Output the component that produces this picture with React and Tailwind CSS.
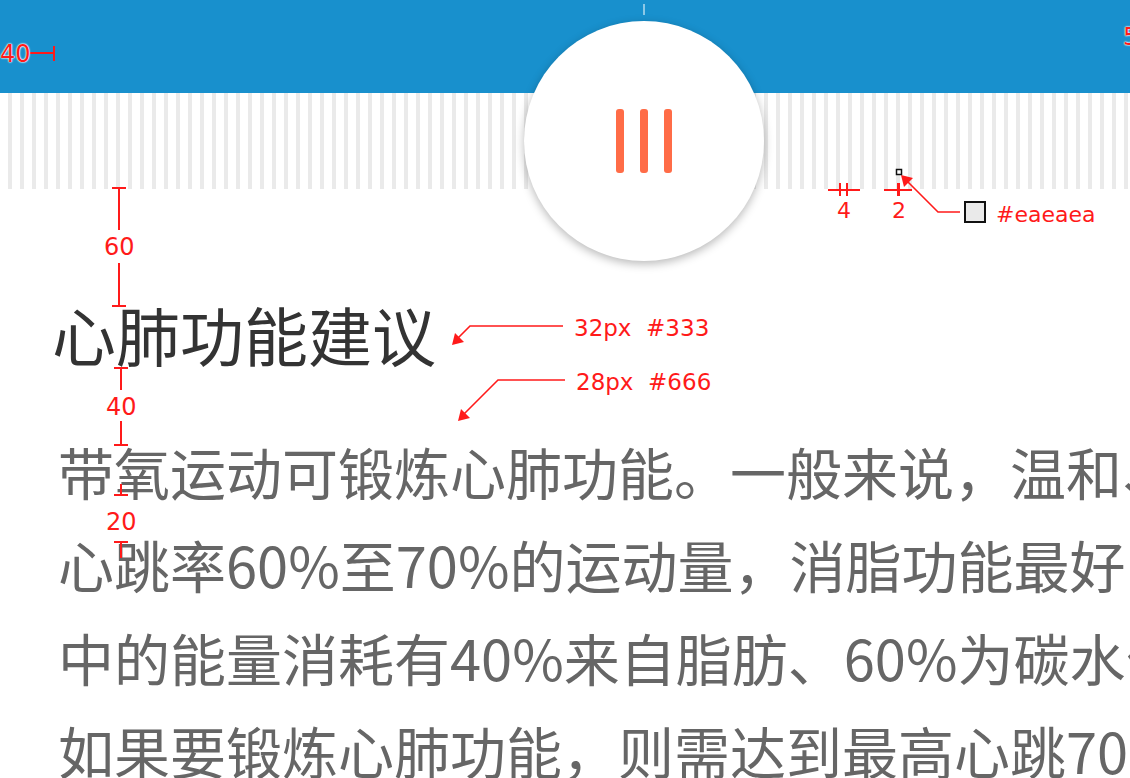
import React from 'react';

// body copy, broken by hand the way the spec sheet shows it (clipped on the right)
const BODY_LINES = [
  '带氧运动可锻炼心肺功能。一般来说，温和、',
  '心跳率60%至70%的运动量，消脂功能最好',
  '中的能量消耗有40%来自脂肪、60%为碳水化',
  '如果要锻炼心肺功能，则需达到最高心跳70%',
];

const RED = '#ff1a1a';

function Label({ className, children }) {
  return (
    <span
      className={`absolute leading-none whitespace-pre text-[#ff1a1a] font-['DejaVu_Sans',sans-serif] ${className}`}
    >
      {children}
    </span>
  );
}

// red spec marks drawn over the page
function SpecMarks() {
  return (
    <>
      <svg
        className="absolute inset-0 pointer-events-none"
        width="1130"
        height="778"
        viewBox="0 0 1130 778"
        fill="none"
      >
        <g stroke={RED} strokeWidth="2">
          {/* left padding 40 */}
          <line x1="30" y1="53" x2="54" y2="53" />
          <line x1="54" y1="46" x2="54" y2="61" />

          {/* 60 */}
          <line x1="112" y1="188" x2="126" y2="188" />
          <line x1="119" y1="188" x2="119" y2="230" />
          <line x1="119" y1="263" x2="119" y2="306" />
          <line x1="112" y1="306" x2="126" y2="306" />

          {/* 40 */}
          <line x1="114" y1="368" x2="128" y2="368" />
          <line x1="121" y1="368" x2="121" y2="390" />
          <line x1="121" y1="421" x2="121" y2="445" />
          <line x1="114" y1="445" x2="128" y2="445" />

          {/* 20 */}
          <line x1="121" y1="484" x2="121" y2="495" />
          <line x1="114" y1="495" x2="128" y2="495" />
          <line x1="114" y1="542" x2="128" y2="542" />
          <line x1="121" y1="542" x2="121" y2="558" />

          {/* stripe gap 4 / stripe width 2 */}
          <line x1="828" y1="190" x2="860" y2="190" />
          <line x1="840" y1="183" x2="840" y2="196" />
          <line x1="847" y1="183" x2="847" y2="196" />
          <line x1="884" y1="190" x2="912" y2="190" />
          <line x1="898.5" y1="183" x2="898.5" y2="196" strokeWidth="3" />
        </g>

        <g stroke={RED} strokeWidth="1.6">
          <polyline points="563,326 470,326 456,340" />
          <polyline points="565,380 498,380 462,416" />
          <polyline points="960,212 938,212 905,179" />
        </g>
        <g fill={RED}>
          <polygon points="452,345 455,333 464,342" />
          <polygon points="458,421 461,409 470,418" />
          <polygon points="901,175 913,178 904,187" />
        </g>

        {/* picked pixel + swatch */}
        <rect x="896.5" y="169.5" width="5" height="5" fill="#fff" stroke="#111" strokeWidth="1.5" />
        <rect x="965" y="202" width="20" height="20" fill="#eaeaea" stroke="#111" strokeWidth="2" />
      </svg>

      <Label className="left-0 top-[42px] text-[24px] [text-shadow:0_0_2px_#fff,0_0_2px_#fff,0_0_1px_#fff]">40</Label>
      <Label className="left-[1123px] top-[25px] text-[24px] [text-shadow:0_0_2px_#fff,0_0_2px_#fff,0_0_1px_#fff]">5</Label>
      <Label className="left-[104px] top-[235px] text-[24px]">60</Label>
      <Label className="left-[106px] top-[395px] text-[24px]">40</Label>
      <Label className="left-[106px] top-[510px] text-[24px]">20</Label>
      <Label className="left-[837px] top-[200px] text-[22px]">4</Label>
      <Label className="left-[892px] top-[200px] text-[22px]">2</Label>
      <Label className="left-[996px] top-[204px] text-[22px]">#eaeaea</Label>
      <Label className="left-[574px] top-[317px] text-[23px]">32px  #333</Label>
      <Label className="left-[576px] top-[371px] text-[23px]">28px  #666</Label>
    </>
  );
}

export default function App() {
  return (
    <div className="relative w-[1130px] h-[778px] overflow-hidden bg-white font-['Noto_Sans_CJK_SC',sans-serif]">
      {/* top bar */}
      <header className="h-[93px] bg-[#1890cd]" />

      {/* striped band */}
      <div className="h-[96px] bg-[image:repeating-linear-gradient(90deg,transparent_0px,transparent_8px,#eaeaea_8px,#eaeaea_12px)]" />

      {/* content */}
      <section className="pt-[112px] pl-[52px]">
        <h1 className="text-[64px] leading-none font-normal text-[#333]">心肺功能建议</h1>
        <div className="mt-[59px] pl-[6px] text-[56px] leading-[93px] text-[#666] whitespace-nowrap">
          {BODY_LINES.map((line) => (
            <p key={line}>{line}</p>
          ))}
        </div>
      </section>

      {/* ruler tick */}
      <div className="absolute left-[643px] top-[4px] w-[2px] h-[11px] bg-white/50" />

      {/* floating pause button */}
      <div className="absolute left-[524px] top-[21px] w-[240px] h-[240px] rounded-full bg-white shadow-[0_3px_10px_rgba(0,0,0,0.28)] flex items-center justify-center gap-[16px]">
        <span className="w-[8px] h-[64px] rounded-[3px] bg-[#ff6c47]" />
        <span className="w-[8px] h-[64px] rounded-[3px] bg-[#ff6c47]" />
        <span className="w-[8px] h-[64px] rounded-[3px] bg-[#ff6c47]" />
      </div>

      <SpecMarks />
    </div>
  );
}
